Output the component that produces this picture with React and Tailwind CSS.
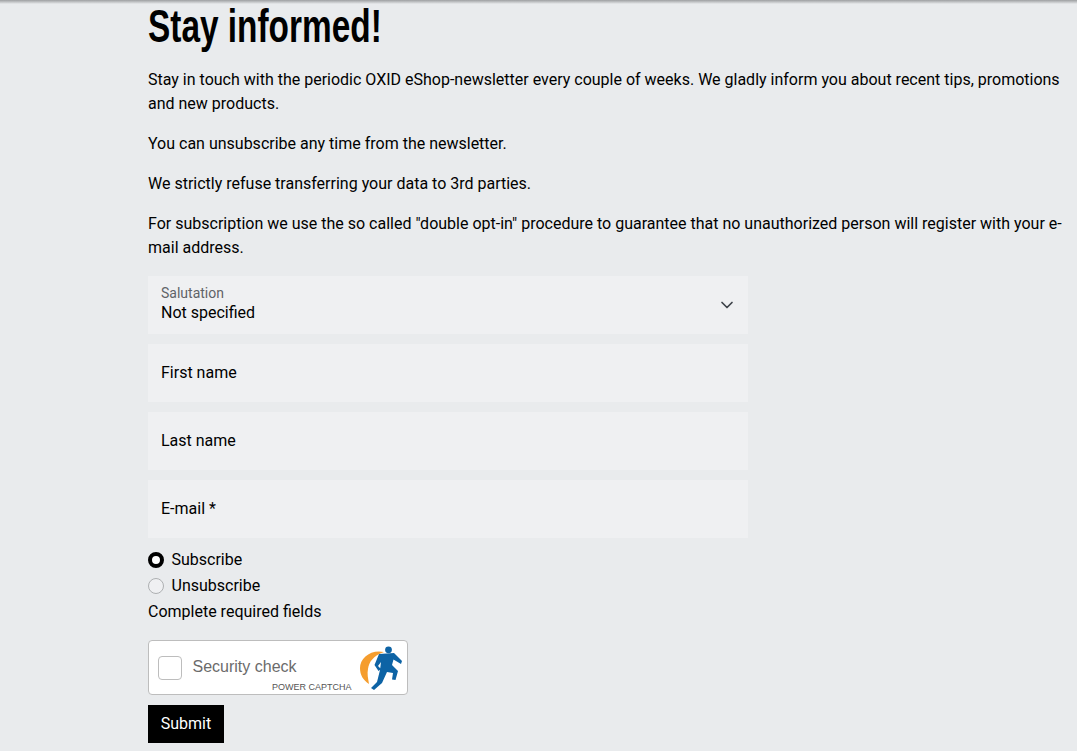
import React from "react";

const Field = ({ label, last }) => (
  <input
    type="text"
    placeholder={label}
    className={`block w-full h-[58px] ${last ? "mb-[9px]" : "mb-[10px]"} px-[13px] pb-[2px] bg-[#eff0f2] text-base text-black placeholder:text-black outline-none`}
  />
);

const Radio = ({ label, checked }) => (
  <label className="flex items-center h-[26px] text-black">
    {checked ? (
      <span className="w-4 h-4 rounded-full border-[4px] border-black bg-white me-[7.5px]"></span>
    ) : (
      <span className="w-4 h-4 rounded-full border border-[#aeb0b2] bg-[#eff0f2] me-[7.5px]"></span>
    )}
    {label}
  </label>
);

const CaptchaLogo = () => (
  <svg width="42" height="44" viewBox="0 0 42 44" className="block">
    <path d="M24 6 C11 3 0 12 0 22 C0 29 3 34 9 38 C8 32 7 28 8 23 C9 16 13 10 24 6 Z" fill="#f59d2e" />
    <circle cx="28.5" cy="3.8" r="3.4" fill="#0d63a5" />
    <path
      d="M19 8 L34 7 L42 15 L41 18 L33.5 13.5 L32 19 L38 25 L35.5 34 L32 33.5 L33 27 L27 26 L22 37 L14 44 L11 42 L17 36 L20 24 L21 16 L18 20 L21 23 L18.5 25 L14.5 19 Z"
      fill="#0d63a5"
    />
  </svg>
);

const App = () => {
  return (
    <div className="relative h-[751px] overflow-hidden bg-[#e9ebed] pl-[148px] pr-[14px] font-['Roboto',sans-serif] text-base leading-6 text-black">
      <div className="absolute top-0 left-0 right-0 h-[4px] bg-gradient-to-b from-[#9d9fa1] to-[#e9ebed]"></div>

      <h1 className="h-[68px] origin-left scale-x-[0.726] whitespace-nowrap font-['Liberation_Sans',sans-serif] text-[46px] leading-[52px] font-bold">
        Stay informed!
      </h1>
      <p className="mb-4">
        Stay in touch with the periodic OXID eShop-newsletter every couple of weeks. We gladly inform you about recent tips, promotions and new products.
      </p>
      <p className="mb-4">You can unsubscribe any time from the newsletter.</p>
      <p className="mb-4">We strictly refuse transferring your data to 3rd parties.</p>
      <p className="mb-4">
        For subscription we use the so called "double opt-in" procedure to guarantee that no unauthorized person will register with your e-mail address.
      </p>

      <form>
        <div className="w-[600px]">
          <div className="flex items-center justify-between h-[58px] mb-[10px] px-[13px] bg-[#eff0f2]">
            <div className="pb-[5px]">
              <div className="text-sm leading-[19px] text-[#5f6368]">Salutation</div>
              <div className="leading-[19px]">Not specified</div>
            </div>
            <svg width="16" height="16" viewBox="0 0 16 16" fill="none" stroke="#3f444a" strokeWidth="1.7" strokeLinecap="round" strokeLinejoin="round">
              <path d="M3 5.5 L8 10.5 L13 5.5" />
            </svg>
          </div>
          <Field label="First name" />
          <Field label="Last name" />
          <Field label="E-mail *" last />
        </div>

        <Radio label="Subscribe" checked />
        <Radio label="Unsubscribe" />
        <p className="mt-[1px] mb-4">Complete required fields</p>

        <div className="flex items-center relative w-[260px] h-[55px] mb-[10px] bg-white border border-[#bdbdbd] rounded-[4px] font-['Liberation_Sans',sans-serif]">
          <span className="w-6 h-6 ms-[9px] bg-white border border-[#bdbdbd] rounded-[4px]"></span>
          <span className="ms-[10.5px] pb-[2px] text-[#6b6b6b]">Security check</span>
          <span className="absolute left-[123px] top-[40px] text-[9px] leading-3 text-[#555]">POWER CAPTCHA</span>
          <span className="absolute left-[211px] top-[5px]">
            <CaptchaLogo />
          </span>
        </div>

        <button type="button" className="block w-[76px] h-[38px] bg-black text-white">
          Submit
        </button>
      </form>
    </div>
  );
};

export default App;
